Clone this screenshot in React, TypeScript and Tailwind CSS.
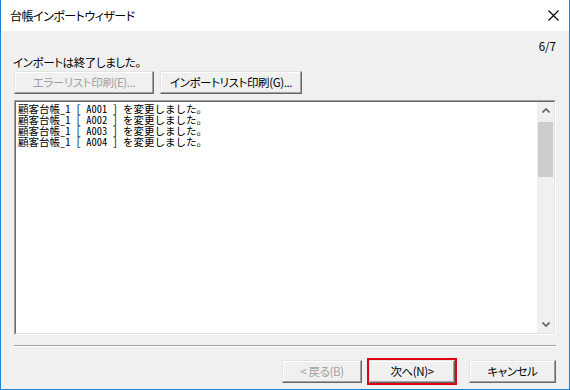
import React from "react";

const lines = ["A001", "A002", "A003", "A004"];

const Btn = ({
  label,
  w,
  disabled,
}: {
  label: string;
  w: string;
  disabled?: boolean;
}) => (
  <div
    className={`${w} h-[23px] flex items-center justify-center border border-t-[#e3e3e3] border-l-[#e3e3e3] border-r-[#696969] border-b-[#696969] bg-[#f0f0f0] shadow-[inset_-1px_-1px_0_#a0a0a0,inset_1px_1px_0_#fff] text-[11.5px] tracking-[-0.4px] leading-none ${
      disabled ? "text-[#a0a0a0]" : "text-black"
    }`}
  >
    {label}
  </div>
);

const Chevron = ({ up }: { up?: boolean }) => (
  <svg width="8" height="5" viewBox="0 0 8 5">
    <path
      d={up ? "M0.5 4.5L4 1L7.5 4.5" : "M0.5 0.5L4 4L7.5 0.5"}
      fill="none"
      stroke="#606060"
      strokeWidth="1.6"
    />
  </svg>
);

const App = () => {
  return (
    <div className="w-[570px] h-[390px] bg-[#f0f0f0] border-x border-b border-[#1883d7] flex flex-col font-['Noto_Sans_CJK_JP',sans-serif] text-[11.5px] tracking-[-0.4px] text-black [font-feature-settings:'palt']">
      {/* title bar */}
      <div className="h-[31px] bg-white flex items-center justify-between pl-[9px] pr-[10px] shrink-0">
        <span className="text-[12px] tracking-[-0.5px]">台帳インポートウィザード</span>
        <svg width="11" height="11" viewBox="0 0 11 11">
          <path d="M0.5 0.5L10.5 10.5M10.5 0.5L0.5 10.5" stroke="#000" strokeWidth="1.1" />
        </svg>
      </div>

      <div className="flex flex-col px-[13px]">
        <div className="mt-[7px] h-[16px] leading-[16px] text-right tracking-normal">6/7</div>
        <div className="h-[16px] leading-[16px] -ml-px">インポートは終了しました。</div>

        <div className="mt-[1px] flex gap-[6px]">
          <Btn label="エラーリスト印刷(E)..." w="w-[140px]" disabled />
          <Btn label="インポートリスト印刷(G)..." w="w-[142px]" />
        </div>

        {/* log box */}
        <div className="mt-[6px] h-[235px] flex border border-t-[#a0a0a0] border-l-[#a0a0a0] border-r-white border-b-white">
          <div className="flex flex-1 border border-t-[#696969] border-l-[#696969] border-r-[#e3e3e3] border-b-[#e3e3e3]">
            <div className="flex-1 bg-white pl-[2px] pt-[1px] text-[10.5px] leading-[11px] tracking-normal [font-feature-settings:'hwid']">
              {lines.map((c) => (
                <div key={c}>顧客台帳_1 [ {c} ] を変更しました。</div>
              ))}
            </div>
            <div className="w-[17px] bg-[#f0f0f0] flex flex-col">
              <div className="h-[17px] flex items-center justify-center">
                <Chevron up />
              </div>
              <div className="mt-[3px] mx-[1px] h-[55px] bg-[#cdcdcd]" />
              <div className="flex-1" />
              <div className="h-[17px] flex items-center justify-center">
                <Chevron />
              </div>
            </div>
          </div>
        </div>

        <div className="mt-[10px] border-t border-t-[#a0a0a0] border-b border-b-white" />

        <div className="mt-[11px] flex justify-end items-center">
          <Btn label="< 戻る(B)" w="w-[80px]" disabled />
          <div className="ml-[5px] border-2 border-[#e1000f] p-0">
            <Btn label="次へ(N)>" w="w-[86px]" />
          </div>
          <div className="ml-[12px]">
            <Btn label="キャンセル" w="w-[87px]" />
          </div>
        </div>
      </div>
    </div>
  );
};

export default App;
